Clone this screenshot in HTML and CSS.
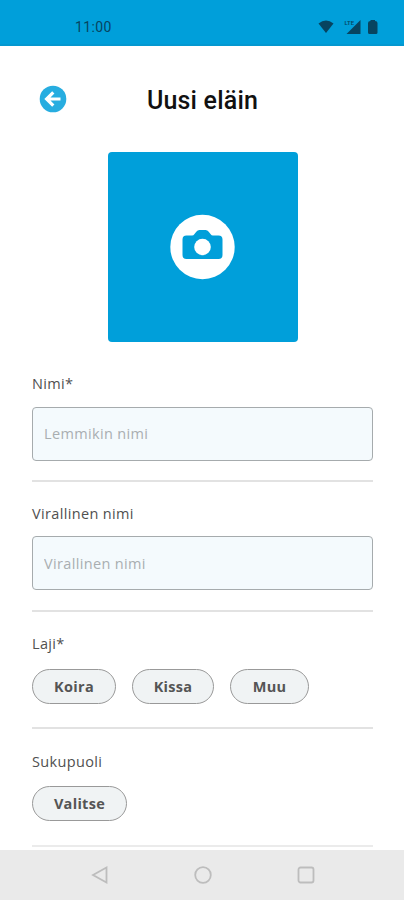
FILE: index.html
```html
<!DOCTYPE html>
<html lang="fi">
<head>
<meta charset="utf-8">
<title>Uusi eläin</title>
<link rel="stylesheet" href="styles.css">
</head>
<body>
<div class="screen">
  <div class="status">
    <span class="time">11:00</span>
    <svg class="status-icons" width="60" height="18" viewBox="0 0 60 18" fill="#074460">
      <path d="M0.500 5.600Q8 -0.400 15.500 5.600L8 15Z"/>
      <path d="M42.500 2V16H28.500Z"/>
      <text x="26.500" y="7" class="net">LTE</text>
      <path d="M52.500 3V2H57V3Q59.500 3 59.500 5V14.500Q59.500 16 58 16H51.500Q50 16 50 14.500V5Q50 3 52.500 3Z"/>
    </svg>
  </div>
  <header class="header">
    <svg class="back" width="28" height="28" viewBox="0 0 28 28">
      <circle cx="14" cy="14" r="13.300" fill="#27ade0"/>
      <path d="M21.500 14H8.500M14.300 7.300L7.600 14L14.300 20.700" fill="none" stroke="#fff" stroke-width="3.200"/>
    </svg>
    <h1>Uusi eläin</h1>
  </header>
  <main>
    <div class="photo">
      <svg width="66" height="66" viewBox="0 0 66 66">
        <circle cx="32.500" cy="33" r="32.200" fill="#fff"/>
        <path transform="translate(-0.500 0)" d="M17 21.500H22.500Q24 21.500 25 20L26.800 17.700Q28 16 30 16H36Q38 16 39.200 17.700L41 20Q42 21.500 43.500 21.500H49Q53 21.500 53 25.500V41Q53 45 49 45H17Q13 45 13 41V25.500Q13 21.500 17 21.500Z" fill="#009fda"/>
        <circle cx="32.500" cy="33" r="8.300" fill="#fff"/>
      </svg>
    </div>
    <section class="field first">
      <label for="nimi">Nimi*</label>
      <input id="nimi" placeholder="Lemmikin nimi">
    </section>
    <section class="field official">
      <label for="virallinen">Virallinen nimi</label>
      <input id="virallinen" placeholder="Virallinen nimi">
    </section>
    <section class="field choice">
      <span class="label">Laji*</span>
      <div class="chips"><button class="koira">Koira</button><button class="kissa">Kissa</button><button class="muu">Muu</button></div>
    </section>
    <section class="field choice last">
      <span class="label">Sukupuoli</span>
      <div class="chips"><button class="valitse">Valitse</button></div>
    </section>
  </main>
  <nav class="nav">
    <svg width="20" height="20" viewBox="0 0 20 20"><path d="M3 10L16.500 2.500V17.500Z"/></svg>
    <svg width="20" height="20" viewBox="0 0 20 20"><circle cx="10" cy="10" r="7.800"/></svg>
    <svg width="20" height="20" viewBox="0 0 20 20"><rect x="2.500" y="2.500" width="15" height="15" rx="2"/></svg>
  </nav>
</div>
</body>
</html>
```
FILE: styles.css
```css
* { box-sizing: border-box; }
body { margin: 0; background: #fff; font-family: "Open Sans", sans-serif; color: #505050; }
.screen { height: 900px; display: flex; flex-direction: column; overflow: hidden; }
.status {
  height: 46px; flex: none; background: #009fda; border-bottom: 2px solid #0498d0;
  display: flex; justify-content: space-between; align-items: flex-start;
  padding: 18px 26px 0 75px;
}
.time { font: 400 14px/19px Roboto, sans-serif; letter-spacing: 0.4px; color: #074460; }
.net { font: 500 6px Roboto, sans-serif; }
.header {
  height: 106px; flex: none; display: grid; grid-template-columns: 28px 1fr 28px;
  align-items: center; padding: 0 38px 0 39px;
}
h1 { margin: 3px 0 0; text-align: center; font: 500 25px/32px Roboto, sans-serif; letter-spacing: 0.2px; color: #111; }
main { flex: 1; min-height: 0; padding: 0 31px 0 32px; }
.photo {
  width: 190px; height: 190px; margin: 0 auto; border-radius: 4px; background: #009fda;
  display: flex; align-items: center; justify-content: center;
}
.field { height: 130px; border-bottom: 2px solid #e2e2e2; padding-top: 22px; }
.field.first { height: 140px; padding-top: 32px; }
label, .label { display: block; font-size: 14.5px; line-height: 20px; letter-spacing: 0.35px; }
input {
  display: block; width: 100%; height: 54px; margin-top: 13px; padding: 0 11px 1px;
  border: 1px solid #a6abad; border-radius: 4px; background: #f4fafd;
  font: 14.5px "Open Sans", sans-serif; letter-spacing: 0.35px;
}
input::placeholder { color: #a9aeb1; opacity: 1; }
.official input { margin-top: 12px; padding-bottom: 0; }
.field.choice { height: 117px; }
.field.last { height: 118px; padding-top: 23px; border-color: #ebebeb; }
.chips { display: flex; gap: 16px; margin-top: 15px; }
.last .chips { margin-top: 14px; }
button {
  height: 35px; padding: 0; border: 1px solid #999; border-radius: 18px;
  background: #f0f3f4; color: #555; font: 700 14.5px "Open Sans", sans-serif; letter-spacing: 0.3px;
}
.koira { width: 84px; }
.kissa { width: 82px; }
.muu { width: 79px; }
.valitse { width: 95px; }
.nav {
  height: 50px; flex: none; background: #eaeaea; display: flex; justify-content: center; gap: 83px;
  padding-left: 2px;
}
.nav svg { margin-top: 15px; fill: none; stroke: #bdbdbd; stroke-width: 1.8; }
```
